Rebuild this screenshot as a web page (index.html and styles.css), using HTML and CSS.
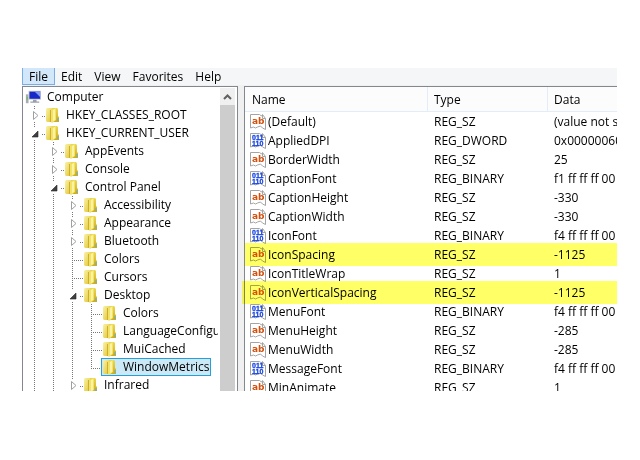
FILE: index.html
```
<!DOCTYPE html>
<html lang="en">
<head>
  <meta charset="UTF-8">
  <meta name="viewport" content="width=device-width, initial-scale=1.0">
  <title>Registry Editor</title>
  <link rel="stylesheet" href="styles.css">
</head>
<body>
  <!-- shared icons -->
  <svg class="sprite" aria-hidden="true">
    <defs>
      <linearGradient id="gold" x1="0" x2="1" y1="0" y2="1">
        <stop offset="0" stop-color="#faf3a8"/>
        <stop offset="1" stop-color="#e2c534"/>
      </linearGradient>
      <linearGradient id="gold-dark" x1="0" x2="0" y1="0" y2="1">
        <stop offset="0" stop-color="#ecd850"/>
        <stop offset="1" stop-color="#d0ab18"/>
      </linearGradient>
    </defs>
    <symbol id="folder" viewBox="0 0 16 16">
      <path d="M7 1h6l1 1v7l1 1v5H8z" fill="url(#gold-dark)"/>
      <path d="M2 2l1-1h5v14H3l-1-1z" fill="url(#gold)"/>
      <path d="M7 3l5-2v12l-4 3-1-1z" fill="#f2e266"/>
      <path d="M9 3l2-1v11l-2 1z" fill="#faf2a4"/>
      <path d="M6.500 3v12" stroke="#cfae2c" stroke-width="1"/>
      <path d="M13.500 11h1v3h-1z" fill="#58b0e0"/>
    </symbol>
    <symbol id="computer" viewBox="0 0 18 16">
      <path d="M1 5h3v10H1z" fill="#a9adb0"/>
      <path d="M2 8h1v3H2z" fill="#4cc83c"/>
      <path d="M4 1h14v10H4z" fill="#c3c8d2"/>
      <path d="M5 2h12v8H5z" fill="#1828c8"/>
      <path d="M11 2h6v6z" fill="#7f9df4"/>
      <path d="M9 11h4v2H9zM6 13h10v1.500H6z" fill="#9aa0a8"/>
    </symbol>
    <symbol id="closed" viewBox="0 0 19 18">
      <path d="M8.500 5.500v8l4.500-4z" fill="#fff" stroke="#a0a0a0"/>
    </symbol>
    <symbol id="open" viewBox="0 0 19 18">
      <path d="M13 7v6H7z" fill="#404040" stroke="#262626" stroke-width=".6"/>
    </symbol>
    <symbol id="page" viewBox="0 0 16 16">
      <path d="M.5.500h9l2 1.500 1-1.500 3 4v11l-3-1.500-2-2-3 1-2 1-2-1-3 1z" fill="#fff" stroke="#a4a4a4"/>
      <path d="M12.500 1v3.500h3" fill="none" stroke="#a4a4a4"/>
    </symbol>
    <symbol id="string" viewBox="0 0 16 16">
      <use href="#page"/>
      <text class="glyph ab" x="2" y="10">ab</text>
    </symbol>
    <symbol id="binary" viewBox="0 0 16 16">
      <use href="#page"/>
      <text class="glyph bits" x="2" y="7">011</text>
      <text class="glyph bits" x="2" y="13">110</text>
    </symbol>
  </svg>

  <div class="window">
    <nav class="menubar">
      <button class="menu-item active">File</button>
      <button class="menu-item">Edit</button>
      <button class="menu-item">View</button>
      <button class="menu-item">Favorites</button>
      <button class="menu-item">Help</button>
    </nav>

    <div class="panes">
      <div class="tree-pane">
        <div class="tree">
          <div class="node"><svg class="icon"><use href="#computer"/></svg>Computer</div>
          <ul class="branch">
            <li>
              <div class="row"><svg class="expander"><use href="#closed"/></svg><span class="node"><svg class="icon"><use href="#folder"/></svg>HKEY_CLASSES_ROOT</span></div>
            </li>
            <li>
              <div class="row"><svg class="expander"><use href="#open"/></svg><span class="node"><svg class="icon"><use href="#folder"/></svg>HKEY_CURRENT_USER</span></div>
              <ul class="branch nested">
                <li>
                  <div class="row"><svg class="expander"><use href="#closed"/></svg><span class="node"><svg class="icon"><use href="#folder"/></svg>AppEvents</span></div>
                </li>
                <li>
                  <div class="row"><svg class="expander"><use href="#closed"/></svg><span class="node"><svg class="icon"><use href="#folder"/></svg>Console</span></div>
                </li>
                <li>
                  <div class="row"><svg class="expander"><use href="#open"/></svg><span class="node"><svg class="icon"><use href="#folder"/></svg>Control Panel</span></div>
                  <ul class="branch nested">
                    <li>
                      <div class="row"><svg class="expander"><use href="#closed"/></svg><span class="node"><svg class="icon"><use href="#folder"/></svg>Accessibility</span></div>
                    </li>
                    <li>
                      <div class="row"><svg class="expander"><use href="#closed"/></svg><span class="node"><svg class="icon"><use href="#folder"/></svg>Appearance</span></div>
                    </li>
                    <li>
                      <div class="row"><svg class="expander"><use href="#closed"/></svg><span class="node"><svg class="icon"><use href="#folder"/></svg>Bluetooth</span></div>
                    </li>
                    <li>
                      <div class="row leaf"><span class="node"><svg class="icon"><use href="#folder"/></svg>Colors</span></div>
                    </li>
                    <li>
                      <div class="row leaf"><span class="node"><svg class="icon"><use href="#folder"/></svg>Cursors</span></div>
                    </li>
                    <li>
                      <div class="row"><svg class="expander"><use href="#open"/></svg><span class="node"><svg class="icon"><use href="#folder"/></svg>Desktop</span></div>
                      <ul class="branch nested complete">
                        <li>
                          <div class="row leaf"><span class="node"><svg class="icon"><use href="#folder"/></svg>Colors</span></div>
                        </li>
                        <li>
                          <div class="row leaf"><span class="node"><svg class="icon"><use href="#folder"/></svg>LanguageConfiguration</span></div>
                        </li>
                        <li>
                          <div class="row leaf"><span class="node"><svg class="icon"><use href="#folder"/></svg>MuiCached</span></div>
                        </li>
                        <li>
                          <div class="row leaf"><span class="node selected"><svg class="icon"><use href="#folder"/></svg>WindowMetrics</span></div>
                        </li>
                      </ul>
                    </li>
                    <li>
                      <div class="row"><svg class="expander"><use href="#closed"/></svg><span class="node"><svg class="icon"><use href="#folder"/></svg>Infrared</span></div>
                    </li>
                  </ul>
                </li>
              </ul>
            </li>
          </ul>
        </div>
        <div class="scrollbar">
          <button class="scroll-up" aria-label="Scroll up">
            <svg class="arrow" viewBox="0 0 9 6"><path d="M1 5l3.500-3.500L8 5" fill="none" stroke="#606060" stroke-width="2"/></svg>
          </button>
          <div class="thumb"></div>
        </div>
      </div>

      <div class="list-pane">
        <table class="values">
          <thead>
            <tr>
              <th class="name">Name</th>
              <th class="type">Type</th>
              <th class="data">Data</th>
            </tr>
          </thead>
          <tbody>
            <tr><td><svg class="icon"><use href="#string"/></svg>(Default)</td><td>REG_SZ</td><td>(value not set)</td></tr>
            <tr><td><svg class="icon"><use href="#binary"/></svg>AppliedDPI</td><td>REG_DWORD</td><td>0x00000060 (96)</td></tr>
            <tr><td><svg class="icon"><use href="#string"/></svg>BorderWidth</td><td>REG_SZ</td><td>25</td></tr>
            <tr><td><svg class="icon"><use href="#binary"/></svg>CaptionFont</td><td>REG_BINARY</td><td>f1 ff ff ff 00 00 00 00</td></tr>
            <tr><td><svg class="icon"><use href="#string"/></svg>CaptionHeight</td><td>REG_SZ</td><td>-330</td></tr>
            <tr><td><svg class="icon"><use href="#string"/></svg>CaptionWidth</td><td>REG_SZ</td><td>-330</td></tr>
            <tr><td><svg class="icon"><use href="#binary"/></svg>IconFont</td><td>REG_BINARY</td><td>f4 ff ff ff 00 00 00 00</td></tr>
            <tr class="marked"><td><svg class="icon"><use href="#string"/></svg>IconSpacing</td><td>REG_SZ</td><td>-1125</td></tr>
            <tr><td><svg class="icon"><use href="#string"/></svg>IconTitleWrap</td><td>REG_SZ</td><td>1</td></tr>
            <tr class="marked wide"><td><svg class="icon"><use href="#string"/></svg>IconVerticalSpacing</td><td>REG_SZ</td><td>-1125</td></tr>
            <tr><td><svg class="icon"><use href="#binary"/></svg>MenuFont</td><td>REG_BINARY</td><td>f4 ff ff ff 00 00 00 00</td></tr>
            <tr><td><svg class="icon"><use href="#string"/></svg>MenuHeight</td><td>REG_SZ</td><td>-285</td></tr>
            <tr><td><svg class="icon"><use href="#string"/></svg>MenuWidth</td><td>REG_SZ</td><td>-285</td></tr>
            <tr><td><svg class="icon"><use href="#binary"/></svg>MessageFont</td><td>REG_BINARY</td><td>f4 ff ff ff 00 00 00 00</td></tr>
            <tr><td><svg class="icon"><use href="#string"/></svg>MinAnimate</td><td>REG_SZ</td><td>1</td></tr>
          </tbody>
        </table>
      </div>
    </div>
  </div>
</body>
</html>
```
FILE: styles.css
```
* {
  box-sizing: border-box;
}
body {
  display: flex;
  height: 100vh;
  margin: 0;
  padding: 68px 23px 69px 22px;
  background-color: #fff;
  color: #000;
  font-family: "Open Sans", "Noto Sans", sans-serif;
  font-size: 12px;
}
button {
  font: inherit;
  color: inherit;
}
.sprite {
  position: absolute;
  width: 0;
  height: 0;
}
.glyph {
  font-family: "DejaVu Sans", sans-serif;
  font-weight: bold;
}
.ab {
  fill: #d4500c;
  font-size: 9px;
}
.bits {
  fill: #1c48e0;
  stroke: #1c48e0;
  stroke-width: .3px;
  font-family: "Liberation Sans", sans-serif;
  font-size: 7px;
}
.window {
  flex: 1;
  display: flex;
  flex-direction: column;
  min-width: 0;
  overflow: hidden;
  background-color: #f0f0f0;
}

/* menu bar */
.menubar {
  display: flex;
  height: 17px;
  margin-bottom: 1px;
  background-color: #f5f6f7;
}
.menu-item {
  padding: 0 6px;
  border: none;
  background: none;
  line-height: 16px;
}
.menu-item.active {
  padding: 0 7px;
  background-color: #d3e7fa;
  box-shadow: inset 1px -1px #78aee5, inset -1px 0 #78aee5;
}

/* panes */
.panes {
  flex: 1;
  display: flex;
  gap: 6px;
  min-height: 0;
}
.tree-pane {
  display: flex;
  width: 216px;
  padding: 1px 2px 0 0;
  border: 1px solid #828790;
  border-bottom: none;
  background-color: #fff;
}
.tree {
  flex: 1;
  overflow: hidden;
  padding-left: 2px;
  white-space: nowrap;
}
.branch {
  position: relative;
  margin: 0;
  padding: 0;
  list-style: none;
}
.nested {
  margin-left: 19px;
}
.branch::before {
  content: "";
  position: absolute;
  top: 0;
  bottom: 0;
  left: 9px;
  width: 1px;
  background: repeating-linear-gradient(#777 0 1px, transparent 1px 2px);
}
.complete::before {
  bottom: 8px;
}
.row {
  position: relative;
  display: flex;
  height: 18px;
  background: repeating-linear-gradient(90deg, #777 0 1px, transparent 1px 2px) 17px 10px / 4px 1px no-repeat;
}
.leaf {
  padding-left: 19px;
  background-position: 9px 10px;
  background-size: 12px 1px;
}
.expander {
  width: 19px;
  height: 18px;
  background: linear-gradient(#fff, #fff) 5px 4px / 10px 11px no-repeat;
}
.node {
  display: flex;
  align-items: center;
  gap: 6px;
  height: 18px;
  padding-right: 4px;
  line-height: 16px;
}
.icon {
  flex: none;
  width: 16px;
  height: 16px;
}
.selected {
  padding-right: 1px;
  background-color: #cbe8f6;
  outline: 1px solid #26a0da;
  outline-offset: -1px;
}

/* scrollbar */
.scrollbar {
  display: flex;
  flex-direction: column;
  width: 15px;
  margin-left: 2px;
  background-color: #f0f0f0;
}
.scroll-up {
  display: flex;
  align-items: center;
  justify-content: center;
  height: 17px;
  padding: 0;
  border: none;
  background-color: #f0f0f0;
}
.arrow {
  width: 9px;
  height: 6px;
}
.thumb {
  flex: 1;
  background-color: #cdcdcd;
}

/* value list */
.list-pane {
  flex: 1;
  min-width: 0;
  border: 1px solid #828790;
  border-width: 1px 0 0 1px;
  background-color: #fff;
}
.values {
  width: 100%;
  min-width: 460px;
  table-layout: fixed;
  border-collapse: separate;
  border-spacing: 0;
  white-space: nowrap;
}
th {
  height: 25px;
  padding: 0 6px;
  border-right: 1px solid #e1eef9;
  border-bottom: 1px solid #e1eef9;
  background-color: #fcfcfc;
  font-weight: normal;
  text-align: left;
}
.name {
  width: 183px;
  padding-left: 7px;
}
.type {
  width: 120px;
}
td {
  height: 19px;
  padding: 0 6px;
  line-height: 18px;
}
td .icon {
  margin-right: 2px;
  vertical-align: middle;
}
tbody td:first-child {
  padding-left: 5px;
}
.marked {
  position: relative;
}
.marked::after {
  content: "";
  position: absolute;
  top: -2px;
  right: 0;
  bottom: -2px;
  left: 0;
  background-color: #ffff66;
  mix-blend-mode: multiply;
}
.marked.wide::after {
  left: -3px;
}
```
